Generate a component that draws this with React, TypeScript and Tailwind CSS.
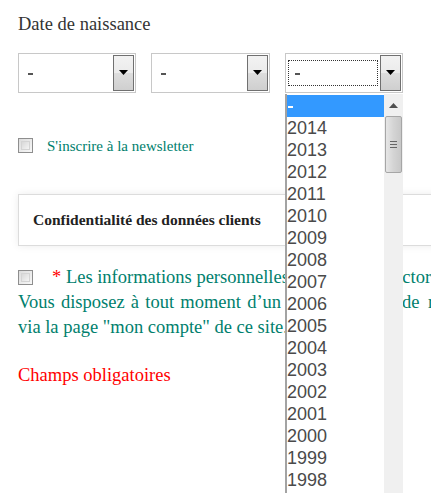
const years = ["2014", "2013", "2012", "2011", "2010", "2009", "2008", "2007", "2006", "2005", "2004", "2003", "2002", "2001", "2000", "1999", "1998", "1997"];

function Arrow() {
  return (
    <svg width="9" height="6" viewBox="0 0 9 6" className="block">
      <path d="M0 0H9L4.5 5Z" fill="#000" />
    </svg>
  );
}

function Select({ width, focused }: { width: string; focused?: boolean }) {
  return (
    <div className={`${width} h-[40px] flex border border-[#c8c8c8] bg-white`}>
      <div className="flex-1 flex items-center pl-[2px] pr-[2px]">
        <div
          className={`flex-1 h-[26px] flex items-center pl-[6px] ${
            focused ? "border border-dotted border-[#333]" : "border border-transparent"
          }`}
        >
          <span className="block w-[5px] h-[2px] bg-[#555] mt-[2px]" />
        </div>
      </div>
      <div className="w-[21px] my-[1px] mr-[1px] border border-[#707070] flex items-center justify-center bg-[linear-gradient(#f2f2f2_0%,#ebebeb_50%,#dddddd_50%,#cfcfcf_100%)]">
        <Arrow />
      </div>
    </div>
  );
}

function Box() {
  return (
    <span className="block shrink-0 w-[15px] h-[15px] border border-[#8e8e8e] bg-[linear-gradient(135deg,#dcdcdc,#f8f8f8)] p-[2px]">
      <span className="block w-full h-full border border-[#d4d4d4] bg-[linear-gradient(135deg,#d8d8d8,#f4f4f4)]" />
    </span>
  );
}

export default function App() {
  return (
    <div className="relative w-[431px] h-[493px] overflow-hidden bg-white text-[#333] font-['Liberation_Serif','Times_New_Roman',serif]">
      <div className="pl-[18px] pt-[13px]">
        <p className="font-['Liberation_Serif',serif] text-[18.5px] leading-[22px] text-[#333]">Date de naissance</p>

        <div className="mt-[18px] flex gap-[15px]">
          <Select width="w-[118px]" />
          <Select width="w-[119px]" />
          <Select width="w-[118px]" focused />
        </div>

        <div className="mt-[45px] flex items-center h-[15px]">
          <Box />
          <span className="ml-[14px] font-['Liberation_Serif',serif] text-[15px] leading-[18px] text-[#00806d]">
            S'inscrire à la newsletter
          </span>
        </div>

        <div className="mt-[41px] h-[52px] w-[480px] flex items-center pl-[14px] border border-[#dcdcdc] shadow-[0_0_8px_rgba(0,0,0,0.08)]">
          <span className="font-['Liberation_Serif',serif] text-[15.5px] font-bold text-[#222]">
            Confidentialité des données clients
          </span>
        </div>

        <div className="mt-[19px] font-['Liberation_Serif',serif] text-[18.5px] leading-[25px] text-[#00806d] whitespace-nowrap">
          <div className="flex items-center">
            <Box />
            <span className="ml-[19px]">
              <span className="text-[#ff0000]">*</span> Les informations personnelles traitées par Doctor Santé sont confidentielles
            </span>
          </div>
          <div>
            <span className="[word-spacing:1.6px]">Vous disposez à tout moment d’un</span>
            <span className="[word-spacing:4px]"> droit d’accès, de rectification</span>
          </div>
          <div>via la page "mon compte" de ce site.</div>
        </div>

        <p className="mt-[23px] font-['Liberation_Serif',serif] text-[18.5px] leading-[25px] text-[#ff0000]">Champs obligatoires</p>
      </div>

      <div className="absolute left-[285px] top-[94px] w-[118px] h-[420px] flex bg-white border-l-2 border-[#a3a3a3] font-['Liberation_Sans',Arial,sans-serif]">
        <div className="flex-1 pt-[1px]">
          <div className="h-[22px] bg-[#3399ff] flex items-center pl-[1px]">
            <span className="block w-[5px] h-[2px] bg-white mt-[2px]" />
          </div>
          {years.map((y) => (
            <div key={y} className="h-[22px] leading-[22px] text-[18px] text-[#4a4a4a]">
              {y}
            </div>
          ))}
        </div>
        <div className="w-[19px] bg-[#f0f0f0] flex flex-col items-center">
          <div className="h-[22px] flex items-center justify-center">
            <svg width="9" height="5" viewBox="0 0 9 5">
              <path d="M0 5H9L4.5 0Z" fill="#505050" />
            </svg>
          </div>
          <div className="w-[17px] h-[57px] rounded-[2px] border border-[#a6a6a6] bg-[linear-gradient(90deg,#e6e6e6,#d4d4d4_50%,#c8c8c8)] flex flex-col items-center justify-center gap-[2px]">
            <span className="block w-[7px] h-px bg-[#666]" />
            <span className="block w-[7px] h-px bg-[#666]" />
            <span className="block w-[7px] h-px bg-[#666]" />
          </div>
        </div>
      </div>
    </div>
  );
}
